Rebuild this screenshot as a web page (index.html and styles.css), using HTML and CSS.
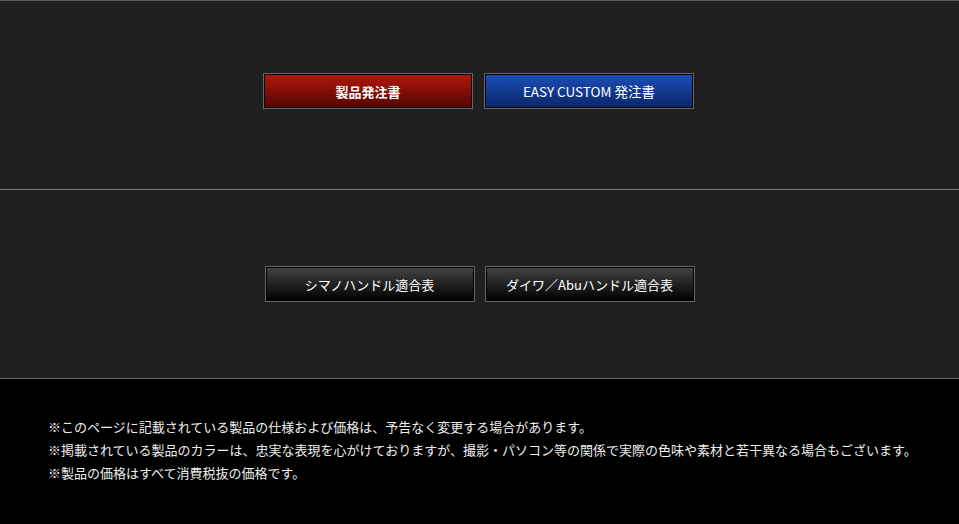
FILE: index.html
```html
<!DOCTYPE html>
<html lang="ja">
<head>
  <meta charset="UTF-8" />
  <meta name="viewport" content="width=device-width, initial-scale=1.0"/>
  <title>発注書</title>
  <link rel="stylesheet" href="styles.css">
</head>
<body>
  <div class="block block-order">
    <div class="btn-row row-order">
      <a href="#" class="btn btn-red">製品発注書</a>
      <a href="#" class="btn btn-blue">EASY CUSTOM 発注書</a>
    </div>
  </div>

  <div class="block block-handle">
    <div class="btn-row row-handle">
      <a href="#" class="btn btn-black">シマノハンドル適合表</a>
      <a href="#" class="btn btn-black">ダイワ／Abuハンドル適合表</a>
    </div>
  </div>

  <div class="notes">
    <p>※このページに記載されている製品の仕様および価格は、予告なく変更する場合があります。</p>
    <p>※掲載されている製品のカラーは、忠実な表現を心がけておりますが、撮影・パソコン等の関係で実際の色味や素材と若干異なる場合もございます。</p>
    <p>※製品の価格はすべて消費税抜の価格です。</p>
  </div>
</body>
</html>
```

FILE: styles.css
```css
body {
  margin: 0;
  padding: 0;
  background: #000;
  font-family: "Noto Sans CJK JP", "DejaVu Sans", sans-serif;
  color: #fff;
  height: 524px;
  overflow: hidden;
}

.block {
  background: #202020;
  box-sizing: border-box;
}

.block-order {
  height: 190px;
  border-top: 1px solid #5a5a5a;
  border-bottom: 1px solid #7a7a7a;
  padding-top: 72px;
}

.block-handle {
  height: 189px;
  border-bottom: 1px solid #6a6a6a;
  padding-top: 76px;
}

.btn-row {
  display: flex;
  justify-content: center;
}

.row-order {
  gap: 11px;
  padding-right: 2px;
}

.row-handle {
  gap: 10px;
}

.btn {
  display: flex;
  align-items: center;
  justify-content: center;
  width: 210px;
  height: 36px;
  box-sizing: border-box;
  border: 1px solid #666;
  box-shadow: inset 0 0 0 1px #000;
  color: #fff;
  text-decoration: none;
  font-size: 13px;
}

.btn-red {
  background: linear-gradient(#b2190b, #520400);
  font-weight: bold;
}

.btn-blue {
  background: linear-gradient(#1c50b8, #0b2568);
  font-size: 13.5px;
}

.btn-black {
  background: linear-gradient(#444, #000);
}

.notes {
  padding: 36px 0 0 48px;
  font-size: 13px;
  line-height: 23px;
  color: #eee;
}

.notes p {
  margin: 0;
}
```
